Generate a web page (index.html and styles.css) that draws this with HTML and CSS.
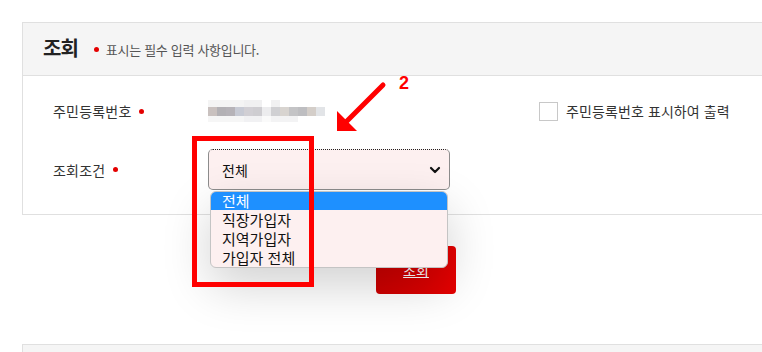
FILE: index.html
```html
<!DOCTYPE html>
<html lang="ko">
  <head>
    <meta charset="UTF-8" />
    <meta name="viewport" content="width=device-width, initial-scale=1.0" />
    <title>조회</title>
    <link rel="stylesheet" href="styles.css">
  </head>
  <body>
    <div class="page">
      <section class="card">
        <div class="card-head">
          <h2>조회</h2>
          <span class="req-dot"></span>
          <span class="note">표시는 필수 입력 사항입니다.</span>
        </div>
        <div class="card-body">
          <div class="row row-first">
            <label class="label">주민등록번호<span class="req-dot"></span></label>
            <div class="value">
              <div class="blur">
                <div class="blur-top"></div>
                <div class="blur-mid"></div>
                <div class="blur-bot"></div>
              </div>
            </div>
            <label class="check"><span class="box"></span>주민등록번호 표시하여 출력</label>
          </div>
          <div class="row row-second">
            <label class="label">조회조건<span class="req-dot"></span></label>
            <div class="select-wrap">
              <div class="select">
                <span>전체</span>
                <svg class="chevron" width="12" height="8" viewBox="0 0 12 8">
                  <path d="M2 2l4 4 4-4" fill="none" stroke="#111" stroke-width="2.2" stroke-linecap="round" stroke-linejoin="round" />
                </svg>
              </div>
              <ul class="options">
                <li class="selected">전체</li>
                <li>직장가입자</li>
                <li>지역가입자</li>
                <li>가입자 전체</li>
              </ul>
            </div>
          </div>
        </div>
      </section>

      <div class="actions">
        <button class="btn-search">조회</button>
      </div>

      <section class="card card-next"></section>

      <!-- annotations -->
      <div class="mark-box"></div>
      <svg class="mark-arrow" width="60" height="62" viewBox="0 0 60 62">
        <line x1="53" y1="10" x2="16" y2="47" stroke="#f00" stroke-width="5" stroke-linecap="round" />
        <polygon points="7,36 7,56 27,56" fill="#f00" />
      </svg>
      <span class="mark-num">2</span>
    </div>
  </body>
</html>
```

FILE: styles.css
```css
* {
  margin: 0;
  padding: 0;
  box-sizing: border-box;
}

html,
body {
  overflow: hidden;
  height: 100%;
}

body {
  font-family: "Noto Sans CJK KR", "Noto Sans", sans-serif;
  background-color: #fff;
  color: #333;
}

.page {
  position: relative;
  width: 810px;
  padding: 22px 0 0 22px;
}

.card {
  border: 1px solid #e0e0e0;
  background-color: #fff;
}

.card-head {
  display: flex;
  align-items: center;
  height: 53px;
  padding-left: 20px;
  background-color: #f5f5f5;
  border-bottom: 1px solid #e0e0e0;
}

.card-head h2 {
  font-size: 20px;
  font-weight: bold;
  letter-spacing: -1px;
  line-height: 1;
  color: #222;
  margin-right: 16px;
  margin-top: -2px;
}

.req-dot {
  display: inline-block;
  width: 5px;
  height: 5px;
  border-radius: 50%;
  background-color: #e40000;
}

.note {
  margin-left: 7px;
  font-size: 13px;
  letter-spacing: -0.3px;
  color: #555;
}

.card-body {
  padding: 20px 30px 24px;
}

.row {
  display: flex;
  align-items: center;
}

.row-first {
  height: 30px;
}

.row-second {
  margin-top: 23px;
}

.label {
  display: flex;
  align-items: center;
  width: 155px;
  font-size: 14px;
  letter-spacing: 0.2px;
  color: #333;
}

.label .req-dot {
  margin-left: 8px;
}

.value {
  width: 331px;
}

.blur {
  width: 117px;
  height: 22px;
  display: flex;
  flex-direction: column;
}

.blur-top {
  height: 7px;
  background: linear-gradient(to right, #f4f4f4 0, #f4f4f4 36px, #f0f0f1 36px, #f0f0f1 54px, #fff 54px, #fff 63px, #f1f1f2 63px, #f1f1f2 72px, #fff 72px);
}

.blur-mid {
  height: 9px;
  background: linear-gradient(to right,
    #c9c1bf 0, #c9c1bf 9px,
    #b3b1b5 9px, #b3b1b5 18px,
    #b6b3b8 18px, #b6b3b8 27px,
    #c7cad4 27px, #c7cad4 36px,
    #d1cfd4 36px, #d1cfd4 45px,
    #cecdd1 45px, #cecdd1 54px,
    #ececee 54px, #ececee 63px,
    #d0d0d3 63px, #d0d0d3 72px,
    #d8d4d0 72px, #d8d4d0 81px,
    #c4c4c6 81px, #c4c4c6 90px,
    #bebec1 90px, #bebec1 99px,
    #d4cec9 99px, #d4cec9 108px,
    #e2e4e7 108px, #e2e4e7 117px);
}

.blur-bot {
  height: 6px;
  background: linear-gradient(to right, #f6f6f6 0, #f6f6f6 36px, #f1f1f3 36px, #f1f1f3 54px, #fafafa 54px, #fafafa 63px, #f3f3f4 63px, #f3f3f4 90px, #fff 90px);
}

.check {
  display: flex;
  align-items: center;
  font-size: 14px;
  letter-spacing: 0.1px;
  color: #333;
}

.box {
  width: 19px;
  height: 19px;
  border: 1px solid #c8c8c8;
  background-color: #fff;
  margin-right: 8px;
}

.select-wrap {
  position: relative;
}

.select {
  display: flex;
  align-items: center;
  justify-content: space-between;
  width: 242px;
  height: 41px;
  padding: 0 8px 0 13px;
  background-color: #fdf0f0;
  border: 1px solid #8c8c8c;
  border-top: 1px dotted #222;
  border-radius: 5px;
  font-size: 14px;
  color: #111;
}

.chevron {
  margin-top: 1px;
}

.options {
  position: absolute;
  top: 42px;
  left: 2px;
  width: 238px;
  list-style: none;
  background-color: #fdf0f0;
  border: 1px solid #c4c4c4;
  border-radius: 6px;
  overflow: hidden;
  box-shadow: 0 18px 48px rgba(0, 0, 0, 0.18);
  z-index: 2;
}

.options li {
  height: 19px;
  line-height: 19px;
  padding-left: 11px;
  font-size: 15px;
  color: #111;
}

.options li.selected {
  height: 18px;
  line-height: 18px;
  background-color: #1e90ff;
  color: #fff;
}

.actions {
  display: flex;
  justify-content: center;
  padding: 31px 0 50px;
}

.btn-search {
  width: 80px;
  height: 48px;
  border: none;
  border-radius: 4px;
  background: linear-gradient(to right, #cc0000, #e60000);
  color: #fff;
  font-family: "Noto Sans CJK KR", sans-serif;
  font-size: 14px;
  text-decoration: underline;
  cursor: pointer;
}

.card-next {
  height: 60px;
  background-color: #f5f5f5;
}

.mark-box {
  position: absolute;
  left: 192px;
  top: 136px;
  width: 122px;
  height: 151px;
  border: 5px solid #f00;
  z-index: 3;
}

.mark-arrow {
  position: absolute;
  left: 330px;
  top: 75px;
  z-index: 3;
}

.mark-num {
  position: absolute;
  left: 399px;
  top: 74px;
  font-family: "Liberation Sans", sans-serif;
  font-size: 18px;
  font-weight: bold;
  line-height: 1;
  color: #f00;
  z-index: 3;
}
```
